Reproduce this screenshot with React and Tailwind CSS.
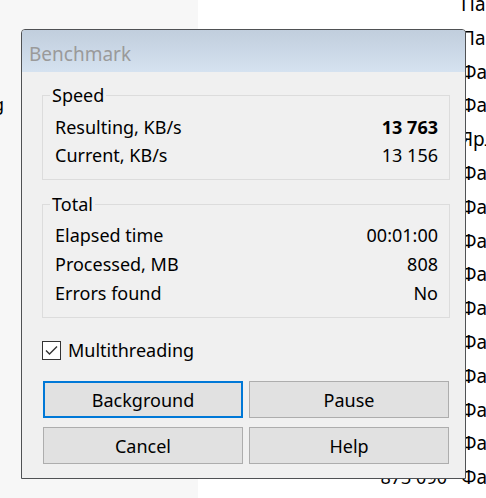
export default function App() {
  const rows = [
    ["", "Папка с файлами"],
    ["", "Папка с файлами"],
    ["", "Файл \"WinRAR\""],
    ["", "Файл \"WinRAR\""],
    ["", "Ярлык"],
    ["", "Файл \"WinRAR\""],
    ["", "Файл \"WinRAR\""],
    ["", "Файл \"WinRAR\""],
    ["", "Файл \"WinRAR\""],
    ["", "Файл \"WinRAR\""],
    ["", "Файл \"WinRAR\""],
    ["", "Файл \"WinRAR\""],
    ["", "Файл \"WinRAR\""],
    ["", "Файл \"WinRAR\""],
    ["873 090", "Файл \"WinRAR\""],
  ];

  return (
    <div className="relative flex h-[498px] w-[486px] overflow-hidden bg-white font-['Noto_Sans',sans-serif] text-[18px] text-black">
      {/* left panel */}
      <div className="w-[198px] shrink-0 bg-[#f7f7f7]">
        <div className="mt-[92px] flex w-[4px] justify-end whitespace-nowrap leading-[24px]">
          <span>Loading</span>
        </div>
      </div>

      {/* right list */}
      <div className="-mt-[12px] min-w-0 flex-1">
        {rows.map(([num, name], i) => (
          <div key={i} className="flex h-[33.8px] whitespace-nowrap leading-[33.8px]">
            <div className="w-[249px] shrink-0 text-right">{num}</div>
            <div className="ml-[14px] shrink-0 text-[19px]">{name}</div>
          </div>
        ))}
      </div>

      {/* dialog */}
      <div className="absolute left-[21px] top-[29px] flex h-[450px] w-[445px] flex-col overflow-hidden rounded-t-[4px] border border-[#4f5154] bg-[#f0f0f0]">
        <div className="h-[42px] shrink-0 bg-linear-to-b from-[#c1cedd] to-[#d5e2f0] pl-[7px] pt-[11px] text-[19px] leading-[26px] text-[#9a9a9a]">
          Benchmark
        </div>

        <div className="flex flex-col pl-[20px] pr-[15px] pt-[12px]">
          <fieldset className="border border-[#dcdcdc] pb-[10px]">
            <legend className="ml-[7px] px-[2px] leading-[22px]">Speed</legend>
            <div className="pl-[12px] pr-[11px] pt-[7px] leading-[28px]">
              <div className="flex justify-between">
                <span>Resulting, KB/s</span>
                <span className="font-bold">13 763</span>
              </div>
              <div className="flex justify-between">
                <span>Current, KB/s</span>
                <span>13 156</span>
              </div>
            </div>
          </fieldset>

          <fieldset className="mt-[13px] border border-[#dcdcdc] pb-[9px]">
            <legend className="ml-[7px] px-[2px] leading-[22px]">Total</legend>
            <div className="pl-[12px] pr-[11px] pt-[6px] leading-[29px]">
              <div className="flex justify-between">
                <span>Elapsed time</span>
                <span>00:01:00</span>
              </div>
              <div className="flex justify-between">
                <span>Processed, MB</span>
                <span>808</span>
              </div>
              <div className="flex justify-between">
                <span>Errors found</span>
                <span>No</span>
              </div>
            </div>
          </fieldset>

          <div className="mt-[20px] flex items-center gap-[7px] leading-[24px]">
            <div className="flex h-[19px] w-[19px] items-center justify-center border border-[#333333] bg-white">
              <svg width="17" height="17" viewBox="0 0 17 17">
                <polyline points="3,8.5 6.5,12 14,4.5" fill="none" stroke="#333333" strokeWidth="1.4" />
              </svg>
            </div>
            <span>Multithreading</span>
          </div>

          <div className="mx-[1px] mt-[19px] grid grid-cols-2 gap-x-[6px] gap-y-[9px] leading-[24px]">
            <div className="flex h-[37px] items-center justify-center border-2 border-[#0078d7] bg-[#e1e1e1]">Background</div>
            <div className="flex h-[37px] items-center justify-center border border-[#adadad] bg-[#e1e1e1]">Pause</div>
            <div className="flex h-[37px] items-center justify-center border border-[#adadad] bg-[#e1e1e1]">Cancel</div>
            <div className="flex h-[37px] items-center justify-center border border-[#adadad] bg-[#e1e1e1]">Help</div>
          </div>
        </div>
      </div>
    </div>
  );
}
